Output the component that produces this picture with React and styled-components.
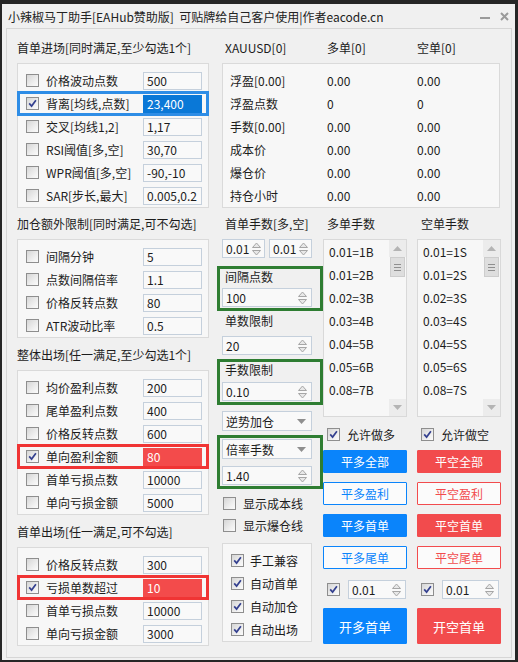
import React from 'react';
import styled, { createGlobalStyle } from 'styled-components';

const GlobalStyle = createGlobalStyle`
  html, body { margin: 0; padding: 0; background: #262626; }
  body {
    font-family: "Noto Sans CJK SC", "Noto Sans", sans-serif;
    font-size: 12px;
    color: #1c1c1c;
    overflow: hidden;
  }
  * { box-sizing: border-box; }
`;

const BLUE = '#0a84fb';
const RED = '#f24b4d';
const GREEN = '#2e7d32';

const Window = styled.div`
  margin: 4px 0 0 2px;
  width: 513px;
  height: 656px;
  background: #f0f0f0;
  display: flex;
  flex-direction: column;
`;

const TitleBar = styled.div`
  height: 24px;
  flex: none;
  display: flex;
  align-items: center;
  justify-content: space-between;
  padding: 0 6px 0 6px;
  color: #222;
  white-space: pre;
`;

const WinBtns = styled.div`
  display: flex;
  align-items: center;
  gap: 10px;
`;

const Panel = styled.div`
  flex: 1;
  margin: 0 3px 2px 4px;
  border: 1px solid #d6d6d6;
  display: flex;
  gap: 8px;
  padding: 9px 10px 0 10px;
`;

const LeftCol = styled.div`
  width: 192px;
  flex: none;
  display: flex;
  flex-direction: column;
`;

const RightCol = styled.div`
  width: 284px;
  flex: none;
  display: flex;
  flex-direction: column;
`;

const SectionTitle = styled.div`
  height: 20px;
  line-height: 20px;
  margin-top: ${p => p.$mt || 0}px;
  padding-left: ${p => p.$pl || 0}px;
  white-space: nowrap;
`;

const GroupBox = styled.div`
  margin-top: 5px;
  border: 1px solid #dadada;
  background: #f7f7f7;
  padding: 5px 0 0 0;
`;

const Row = styled.div`
  height: 23px;
  display: flex;
  align-items: center;
  padding-left: 8px;
  outline: ${p => (p.$hl ? `3px solid ${p.$hl}` : 'none')};
  outline-offset: -2px;
`;

const RowLabel = styled.span`
  width: 97px;
  margin-left: 7px;
  white-space: nowrap;
`;

const Field = styled.div`
  width: 59px;
  height: 18px;
  line-height: 16px;
  border: 1px solid ${p => p.$bg || '#c5d0dc'};
  background: ${p => p.$bg || '#f9f9f9'};
  color: ${p => (p.$bg ? '#fff' : '#1c1c1c')};
  padding-left: 3px;
  white-space: nowrap;
  overflow: hidden;
`;

const CheckBoxEl = styled.span`
  width: 13px;
  height: 13px;
  flex: none;
  border: 1px solid #8e8e8e;
  background: linear-gradient(135deg, #d6d6d6 0%, #f0f0f0 65%, #fbfbfb 100%);
  display: inline-flex;
  align-items: center;
  justify-content: center;
`;

const Check = ({ on }) => (
  <CheckBoxEl>
    {on && (
      <svg width="9" height="9" viewBox="0 0 9 9">
        <path d="M1.2 4.4 L3.6 7.1 L7.9 1.3" fill="none" stroke="#34408f" strokeWidth="1.7" />
      </svg>
    )}
  </CheckBoxEl>
);

/* right top table */
const TableWrap = styled.div`
  padding-left: 5px;
  display: flex;
  flex-direction: column;
`;

const HeadRow = styled.div`
  height: 20px;
  line-height: 20px;
  display: grid;
  grid-template-columns: 102px 90px 1fr;
  padding-left: 3px;
`;

const TableBox = styled.div`
  margin-top: 5px;
  width: 278px;
  border: 1px solid #dadada;
  background: #f7f7f7;
  padding: 5px 0 0 7px;
  height: 145px;
`;

const TRow = styled.div`
  height: 23px;
  display: grid;
  grid-template-columns: 97px 90px 1fr;
  align-items: center;
`;

/* lower right */
const Lower = styled.div`
  margin-top: 6px;
  display: flex;
`;

const CtrlCol = styled.div`
  width: 106px;
  flex: none;
  padding: 0 11px 0 5px;
  display: flex;
  flex-direction: column;
`;

const SideCol = styled.div`
  width: 84px;
  flex: none;
  margin-left: ${p => p.$ml || 0}px;
  display: flex;
  flex-direction: column;
`;

const SmallLabel = styled.div`
  height: ${p => p.$h || 20}px;
  line-height: ${p => p.$h || 20}px;
  padding-left: 3px;
  margin-bottom: ${p => p.$mb || 0}px;
  white-space: nowrap;
`;

const SpinPair = styled.div`
  margin-top: 5px;
  display: flex;
  gap: 4px;
`;

const SpinBox = styled.div`
  height: 19px;
  width: ${p => (p.$w ? `${p.$w}px` : '100%')};
  flex: none;
  margin-top: ${p => p.$mt || 0}px;
  border: 1px solid #c5d0dc;
  background: #f9f9f9;
  display: flex;
  align-items: center;
  justify-content: space-between;
  padding: 0 ${p => p.$pr || 4}px 0 3px;
`;

const SpinArrows = () => (
  <svg width="9" height="14" viewBox="0 0 9 14">
    <path d="M0.5 5.5 L4.5 1 L8.5 5.5 Z" fill="#e8e8e8" stroke="#a6a6a6" />
    <path d="M0.5 8.5 L4.5 13 L8.5 8.5 Z" fill="#e8e8e8" stroke="#a6a6a6" />
  </svg>
);

const Spinner = ({ value, w, mt, pr }) => (
  <SpinBox $w={w} $mt={mt} $pr={pr}>
    <span>{value}</span>
    <SpinArrows />
  </SpinBox>
);

const DropBox = styled.div`
  height: 20px;
  margin-top: ${p => p.$mt || 0}px;
  border: 1px solid #c5d0dc;
  background: #f9f9f9;
  display: flex;
  align-items: center;
  justify-content: space-between;
  padding: 0 5px 0 3px;
`;

const Dropdown = ({ value, mt }) => (
  <DropBox $mt={mt}>
    <span>{value}</span>
    <svg width="9" height="5" viewBox="0 0 9 5">
      <path d="M0 0 L9 0 L4.5 5 Z" fill="#8f8f8f" />
    </svg>
  </DropBox>
);

const GreenBox = styled.div`
  margin: ${p => p.$mt || 0}px -11px 0 -5px;
  border: 3px solid ${GREEN};
  padding: 1px 8px 1px 2px;
  display: flex;
  flex-direction: column;
  gap: ${p => p.$gap || 0}px;
`;

const CheckLine = styled.div`
  height: 22px;
  display: flex;
  align-items: center;
  padding-left: 1px;
  margin-top: ${p => p.$mt || 0}px;
  gap: 7px;
`;

const CheckGroup = styled.div`
  margin-top: 7px;
  border: 1px solid #dadada;
  background: #f7f7f7;
  padding: 5px 0 0 8px;
  height: 99px;
`;

const GroupItem = styled.div`
  height: 23px;
  display: flex;
  align-items: center;
  gap: 6px;
`;

const ListBox = styled.div`
  margin-top: 5px;
  height: 178px;
  border: 1px solid #d9d9d9;
  background: #f7f7f7;
  display: flex;
`;

const ListItems = styled.div`
  flex: 1;
  padding-left: 5px;
  overflow: hidden;
`;

const ListItem = styled.div`
  height: 23px;
  line-height: 23px;
  white-space: nowrap;
`;

const ScrollBar = styled.div`
  width: 17px;
  flex: none;
  display: flex;
  flex-direction: column;
`;

const ScrollBtn = styled.div`
  height: 17px;
  background: #ececec;
  display: flex;
  align-items: center;
  justify-content: center;
`;

const Thumb = styled.div`
  height: 20px;
  margin: 0 1px;
  background: #dedede;
  border: 1px solid #cdcdcd;
  display: flex;
  flex-direction: column;
  align-items: center;
  justify-content: center;
  gap: 2px;
`;

const Grip = styled.span`
  width: 7px;
  height: 1px;
  background: #8f8f8f;
`;

const Track = styled.div`
  flex: 1;
`;

const AllowLine = styled.div`
  margin-top: 7px;
  height: 20px;
  display: flex;
  align-items: center;
  padding-left: 4px;
  gap: 7px;
`;

const Btn = styled.div`
  height: ${p => (p.$big ? 36 : 23)}px;
  margin-top: ${p => p.$mt || 9}px;
  display: flex;
  align-items: center;
  justify-content: center;
  font-size: ${p => (p.$big ? 13 : 12)}px;
  border: 1px solid ${p => p.$c};
  border-radius: 1px;
  background: ${p => (p.$outline ? '#fbfbfb' : p.$c)};
  color: ${p => (p.$outline ? p.$c : '#fff')};
`;

const SpinLine = styled.div`
  margin-top: 11px;
  height: 19px;
  display: flex;
  align-items: center;
  padding-left: 4px;
  gap: 8px;
`;

const entryRows = [
  ['价格波动点数', '500'],
  ['背离[均线,点数]', '23,400', true, 'blue'],
  ['交叉[均线1,2]', '1,17'],
  ['RSI阈值[多,空]', '30,70'],
  ['WPR阈值[多,空]', '-90,-10'],
  ['SAR[步长,最大]', '0.005,0.2'],
];
const addRows = [
  ['间隔分钟', '5'],
  ['点数间隔倍率', '1.1'],
  ['价格反转点数', '80'],
  ['ATR波动比率', '0.5'],
];
const exitRows = [
  ['均价盈利点数', '200'],
  ['尾单盈利点数', '400'],
  ['价格反转点数', '600'],
  ['单向盈利金额', '80', true, 'red'],
  ['首单亏损点数', '10000'],
  ['单向亏损金额', '5000'],
];
const firstExitRows = [
  ['价格反转点数', '300'],
  ['亏损单数超过', '10', true, 'red'],
  ['首单亏损点数', '10000'],
  ['单向亏损金额', '3000'],
];

const HL = { blue: '#2e8de6', red: '#f03434' };
const FILL = { blue: '#0a78d7', red: '#f34b4b' };

const OptionRows = ({ rows }) =>
  rows.map(([label, val, on, hl]) => (
    <Row key={label} $hl={hl ? HL[hl] : null}>
      <Check on={on} />
      <RowLabel>{label}</RowLabel>
      <Field $bg={hl ? FILL[hl] : null}>{val}</Field>
    </Row>
  ));

const tableRows = [
  ['浮盈[0.00]', '0.00', '0.00'],
  ['浮盈点数', '0', '0'],
  ['手数[0.00]', '0.00', '0.00'],
  ['成本价', '0.00', '0.00'],
  ['爆仓价', '0.00', '0.00'],
  ['持仓小时', '0.00', '0.00'],
];

const lots = ['0.01', '0.01', '0.02', '0.03', '0.04', '0.05', '0.08'];

const ScrollList = ({ suffix }) => (
  <ListBox>
    <ListItems>
      {lots.map((l, i) => (
        <ListItem key={i}>{`${l}=${i + 1}${suffix}`}</ListItem>
      ))}
    </ListItems>
    <ScrollBar>
      <ScrollBtn>
        <svg width="9" height="5" viewBox="0 0 9 5"><path d="M0 5 L4.5 0 L9 5 Z" fill="#b4b4b4" /></svg>
      </ScrollBtn>
      <Thumb>
        <Grip />
        <Grip />
        <Grip />
      </Thumb>
      <Track />
      <ScrollBtn>
        <svg width="9" height="5" viewBox="0 0 9 5"><path d="M0 0 L9 0 L4.5 5 Z" fill="#b4b4b4" /></svg>
      </ScrollBtn>
    </ScrollBar>
  </ListBox>
);

const SideColumn = ({ title, suffix, allow, color, labels, ml, spinW }) => (
  <SideCol $ml={ml}>
    <SmallLabel style={{ paddingLeft: 4 }}>{title}</SmallLabel>
    <ScrollList suffix={suffix} />
    <AllowLine>
      <Check on />
      <span>{allow}</span>
    </AllowLine>
    <Btn $c={color} $mt={6}>{labels[0]}</Btn>
    <Btn $c={color} $outline>{labels[1]}</Btn>
    <Btn $c={color}>{labels[2]}</Btn>
    <Btn $c={color} $outline>{labels[3]}</Btn>
    <SpinLine>
      <Check on />
      <Spinner value="0.01" w={spinW} />
    </SpinLine>
    <Btn $c={color} $big>{labels[4]}</Btn>
  </SideCol>
);

export default function App() {
  return (
    <>
      <GlobalStyle />
      <Window>
        <TitleBar>
          <span>小辣椒马丁助手[EAHub赞助版]  可贴牌给自己客户使用|作者eacode.cn</span>
          <WinBtns>
            <svg width="10" height="10" viewBox="0 0 10 10">
              <rect x="0" y="6" width="10" height="2" fill="#9a9a9a" />
            </svg>
            <svg width="9" height="9" viewBox="0 0 9 9">
              <path d="M1 1 L8 8 M8 1 L1 8" stroke="#9a9a9a" strokeWidth="2" />
            </svg>
          </WinBtns>
        </TitleBar>
        <Panel>
          <LeftCol>
            <SectionTitle>首单进场[同时满足,至少勾选1个]</SectionTitle>
            <GroupBox>
              <OptionRows rows={entryRows} />
            </GroupBox>
            <SectionTitle $mt={6}>加仓额外限制[同时满足,可不勾选]</SectionTitle>
            <GroupBox>
              <OptionRows rows={addRows} />
            </GroupBox>
            <SectionTitle $mt={7}>整体出场[任一满足,至少勾选1个]</SectionTitle>
            <GroupBox>
              <OptionRows rows={exitRows} />
            </GroupBox>
            <SectionTitle $mt={7}>首单出场[任一满足,可不勾选]</SectionTitle>
            <GroupBox>
              <OptionRows rows={firstExitRows} />
            </GroupBox>
          </LeftCol>
          <RightCol>
            <TableWrap>
              <HeadRow>
                <span>XAUUSD[0]</span>
                <span>多单[0]</span>
                <span>空单[0]</span>
              </HeadRow>
              <TableBox>
                {tableRows.map(r => (
                  <TRow key={r[0]}>
                    <span>{r[0]}</span>
                    <span>{r[1]}</span>
                    <span>{r[2]}</span>
                  </TRow>
                ))}
              </TableBox>
            </TableWrap>
            <Lower>
              <CtrlCol>
                <SmallLabel>首单手数[多,空]</SmallLabel>
                <SpinPair>
                  <Spinner value="0.01" w={43} pr={3} />
                  <Spinner value="0.01" w={43} pr={3} />
                </SpinPair>
                <GreenBox $mt={8}>
                  <SmallLabel $h={14} $mb={4}>间隔点数</SmallLabel>
                  <Spinner value="100" />
                </GreenBox>
                <SmallLabel>单数限制</SmallLabel>
                <Spinner value="20" mt={5} />
                <GreenBox $mt={4}>
                  <SmallLabel $h={14} $mb={5}>手数限制</SmallLabel>
                  <Spinner value="0.10" />
                </GreenBox>
                <Dropdown value="逆势加仓" mt={6} />
                <GreenBox $mt={4} $gap={7}>
                  <Dropdown value="倍率手数" />
                  <Spinner value="1.40" />
                </GreenBox>
                <CheckLine $mt={3}>
                  <Check />
                  <span>显示成本线</span>
                </CheckLine>
                <CheckLine>
                  <Check />
                  <span>显示爆仓线</span>
                </CheckLine>
                <CheckGroup>
                  {['手工兼容', '自动首单', '自动加仓', '自动出场'].map(t => (
                    <GroupItem key={t}>
                      <Check on />
                      <span>{t}</span>
                    </GroupItem>
                  ))}
                </CheckGroup>
              </CtrlCol>
              <SideColumn
                title="多单手数"
                suffix="B"
                allow="允许做多"
                color={BLUE}
                labels={['平多全部', '平多盈利', '平多首单', '平多尾单', '开多首单']}
                spinW={58}
              />
              <SideColumn
                title="空单手数"
                suffix="S"
                allow="允许做空"
                color={RED}
                labels={['平空全部', '平空盈利', '平空首单', '平空尾单', '开空首单']}
                ml={10}
                spinW={57}
              />
            </Lower>
          </RightCol>
        </Panel>
      </Window>
    </>
  );
}
